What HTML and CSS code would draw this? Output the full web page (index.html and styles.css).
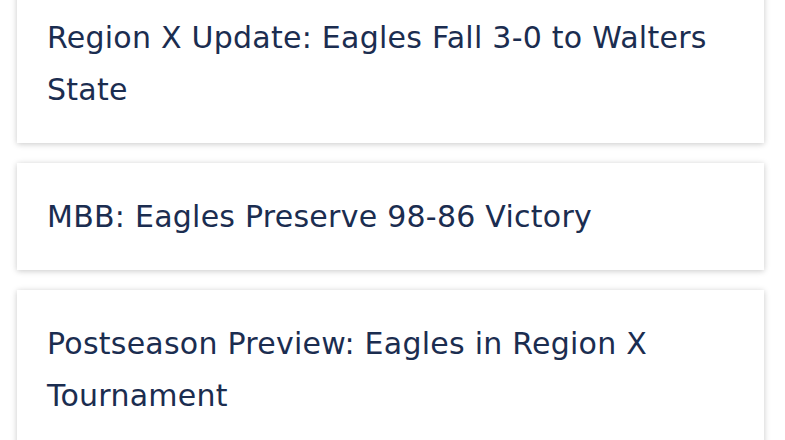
FILE: index.html
```html
<!DOCTYPE html>
<html lang="en">
<head>
  <meta charset="UTF-8">
  <meta name="viewport" content="width=device-width, initial-scale=1.0">
  <title>News</title>
  <link rel="stylesheet" href="styles.css">
</head>
<body>
  <div class="news-list">
    <!-- articles -->
    <a class="news-card" href="#">Region X Update: Eagles Fall 3-0 to Walters State</a>
    <a class="news-card" href="#">MBB: Eagles Preserve 98-86 Victory</a>
    <a class="news-card" href="#">Postseason Preview: Eagles in Region X Tournament</a>
  </div>
</body>
</html>
```

FILE: styles.css
```css
body {
  margin: 0;
  padding: 0;
  background: #fff;
  font-family: "DejaVu Sans", "Open Sans", sans-serif;
  overflow: hidden;
}
.news-list {
  display: flex;
  flex-direction: column;
  gap: 20px;
  margin: -16px 21px 0 17px;
}
.news-card {
  display: block;
  background: #fff;
  padding: 28px 30px 27px;
  font-size: 30px;
  letter-spacing: 0.25px;
  line-height: 52px;
  color: #1b2d50;
  text-decoration: none;
  box-shadow: 0 1px 6px rgba(0, 0, 0, 0.22);
}
```
